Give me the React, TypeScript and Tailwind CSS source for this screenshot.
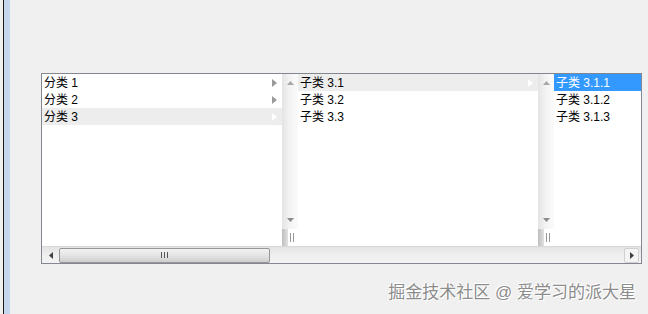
import type { ReactNode } from "react";

// ===============================================
// DATA
// ===============================================

const categories = ["分类 1", "分类 2", "分类 3"];

const subCategories = ["子类 3.1", "子类 3.2", "子类 3.3"];

const leafItems = ["子类 3.1.1", "子类 3.1.2", "子类 3.1.3"];

const font = {
  fontFamily: '"Liberation Sans", "Noto Sans CJK SC", sans-serif',
};

// ===============================================
// SMALL PARTS
// ===============================================

function RightArrow({ light }: { light?: boolean }) {
  return (
    <svg width="5" height="8" viewBox="0 0 5 8" className="shrink-0">
      <path d="M0 0 L5 4 L0 8 Z" fill={light ? "#ffffff" : "#9a9a9a"} />
    </svg>
  );
}

function Row({
  label,
  active,
  selected,
  arrow,
}: {
  label: string;
  active?: boolean;
  selected?: boolean;
  arrow?: boolean;
}) {
  const bg = selected ? "bg-[#3399ff] text-white" : active ? "bg-[#ededed]" : "";

  return (
    <div
      className={`h-[17px] flex items-center justify-between pl-[2px] pr-[5px] text-[12px] leading-none text-black ${bg}`}
    >
      <span className="whitespace-nowrap">{label}</span>

      {arrow && <RightArrow light={active} />}
    </div>
  );
}

function Column({ width, children }: { width: string; children: ReactNode }) {
  return <div className={`${width} h-full bg-white shrink-0 overflow-hidden`}>{children}</div>;
}

// disabled vertical scrollbar + size grip under it
function VScroll() {
  return (
    <div className="w-[16px] h-full flex flex-col shrink-0">
      <div className="flex-1 flex flex-col items-center justify-between py-[7px] bg-gradient-to-r from-[#e4e4e4] via-[#f4f4f4] to-[#fbfbfb]">
        <svg width="7" height="4" viewBox="0 0 7 4">
          <path d="M0 4 L3.5 0 L7 4 Z" fill="#a8a8a8" />
        </svg>

        <svg width="7" height="4" viewBox="0 0 7 4">
          <path d="M0 0 L3.5 4 L7 0 Z" fill="#8a8a8a" />
        </svg>
      </div>

      <div className="h-[17px] flex bg-white">
        <div className="w-[6px] h-full bg-gradient-to-r from-[#bdbdbd] to-[#e2e2e2]" />

        <div className="flex items-center gap-[2px] pl-[2px]">
          <div className="w-px h-[9px] bg-[#9a9a9a]" />

          <div className="w-px h-[9px] bg-[#9a9a9a]" />
        </div>
      </div>
    </div>
  );
}

// ===============================================
// APP
// ===============================================

export default function App() {
  return (
    <div className="w-[648px] h-[314px] bg-[#f0f0f0] flex overflow-hidden" style={font}>
      {/* LEFT WINDOW EDGE */}

      <div className="w-[3px] h-full bg-[#f0f0f0]" />

      <div className="w-px h-full bg-[#1a1a1a]" />

      <div className="w-[6px] h-full bg-[#c6d6ec]" />

      {/* CONTENT */}

      <div className="flex-1 flex flex-col pt-[73px] pl-[31px]">
        <div className="w-[601px] h-[191px] border border-[#828790] bg-white flex flex-col">
          {/* COLUMNS */}

          <div className="h-[172px] flex">
            <Column width="w-[240px]">
              {categories.map((c, i) => (
                <Row key={c} label={c} arrow active={i === 2} />
              ))}
            </Column>

            <VScroll />

            <Column width="w-[240px]">
              {subCategories.map((c, i) => (
                <Row key={c} label={c} active={i === 0} arrow={i === 0} />
              ))}
            </Column>

            <VScroll />

            <Column width="w-[87px]">
              {leafItems.map((c, i) => (
                <Row key={c} label={c} selected={i === 0} />
              ))}
            </Column>
          </div>

          {/* HORIZONTAL SCROLLBAR */}

          <div className="h-[17px] flex items-center bg-gradient-to-b from-[#e3e3e3] via-[#efefef] to-[#f3f3f3] border-t border-[#d8d8d8]">
            <div className="w-[17px] h-full flex items-center justify-center">
              <svg width="4" height="7" viewBox="0 0 4 7">
                <path d="M4 0 L0 3.5 L4 7 Z" fill="#404040" />
              </svg>
            </div>

            <div className="w-[211px] h-[15px] rounded-[2px] border border-[#979797] bg-gradient-to-b from-[#f2f2f2] via-[#e4e4e4] to-[#cfcfcf] flex items-center justify-center gap-[2px]">
              <div className="w-px h-[6px] bg-[#555]" />

              <div className="w-px h-[6px] bg-[#555]" />

              <div className="w-px h-[6px] bg-[#555]" />
            </div>

            <div className="flex-1" />

            <div className="w-[15px] h-[15px] mr-[2px] rounded-[2px] border border-[#d0d0d0] bg-[#f4f4f4] flex items-center justify-center">
              <svg width="4" height="7" viewBox="0 0 4 7">
                <path d="M0 0 L4 3.5 L0 7 Z" fill="#404040" />
              </svg>
            </div>
          </div>
        </div>

        {/* WATERMARK */}

        <div className="flex justify-end pr-[12px] mt-[19px]">
          <span
            className="text-[17px] leading-[20px] text-[#8c8c8c] whitespace-nowrap"
            style={{ textShadow: "1px 1px 0 #ffffff, -1px -1px 0 #ffffff" }}
          >
            掘金技术社区 @ 爱学习的派大星
          </span>
        </div>
      </div>
    </div>
  );
}
